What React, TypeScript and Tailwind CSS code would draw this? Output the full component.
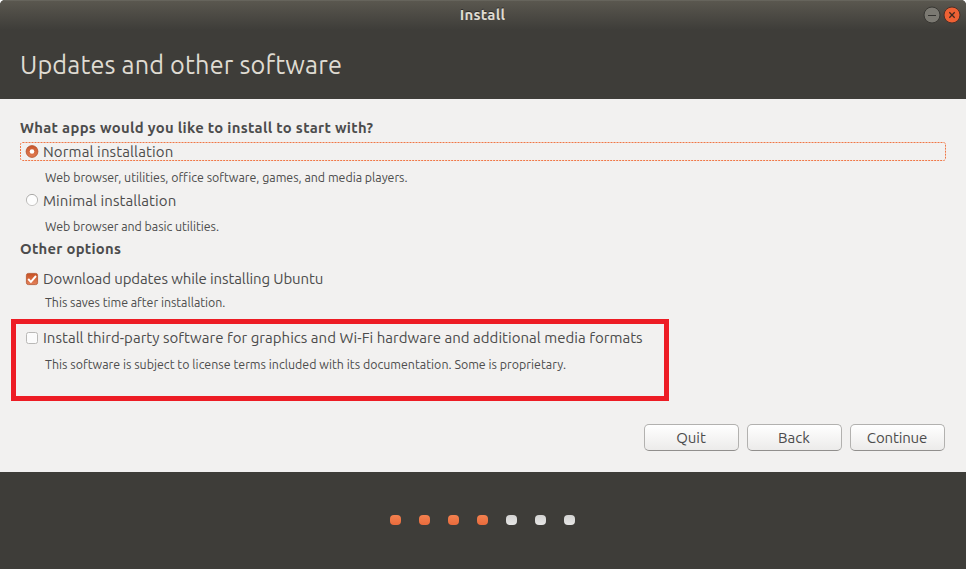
import type { ReactNode } from 'react';

function Radio({ checked = false }: { checked?: boolean }) {
  return (
    <svg className="size-[14px] shrink-0" viewBox="0 0 14 14">
      <defs>
        <linearGradient id="radioOn" x1="0" y1="0" x2="0" y2="1">
          <stop offset="0" stopColor="#c9572c" />
          <stop offset="1" stopColor="#e27d54" />
        </linearGradient>
        <linearGradient id="radioOff" x1="0" y1="0" x2="0" y2="1">
          <stop offset="0" stopColor="#a9a8a6" />
          <stop offset="1" stopColor="#c9c8c6" />
        </linearGradient>
      </defs>
      {checked ? (
        <>
          <circle cx="7" cy="6.5" r="5.9" fill="url(#radioOn)" stroke="#b4522c" strokeWidth="0.8" />
          <circle cx="7" cy="6.5" r="2.3" fill="#fff" />
        </>
      ) : (
        <circle cx="7" cy="7" r="5.6" fill="#fdfdfd" stroke="url(#radioOff)" />
      )}
    </svg>
  );
}

function Checkbox({ checked = false }: { checked?: boolean }) {
  return (
    <svg className="size-[14px] shrink-0" viewBox="0 0 14 14">
      <defs>
        <linearGradient id="checkOn" x1="0" y1="0" x2="0" y2="1">
          <stop offset="0" stopColor="#c85123" />
          <stop offset="1" stopColor="#e4825b" />
        </linearGradient>
      </defs>
      {checked ? (
        <>
          <rect x="1.4" y="1.4" width="11.2" height="11.2" rx="2" fill="url(#checkOn)" stroke="#b1542e" strokeWidth="0.8" />
          <path d="M3.2 7 5.9 9.8 11 4" fill="none" stroke="#fff" strokeWidth="1.9" />
        </>
      ) : (
        <rect x="1.5" y="1.5" width="11" height="11" rx="2" fill="#fbfbfb" stroke="#b9b8b6" />
      )}
    </svg>
  );
}

function Note({ className, children }: { className: string; children: ReactNode }) {
  return <p className={`ml-[25px] h-5 text-[12.4px] leading-[21px] ${className}`}>{children}</p>;
}

function Button({ className = '', children }: { className?: string; children: ReactNode }) {
  return (
    <button
      className={`h-[27px] w-[95px] rounded-[5px] border border-[#b2b1af] border-b-[#918f8d] bg-linear-to-b from-white to-[#ecebea] pr-px text-[15px] leading-[25px] ${className}`}
    >
      {children}
    </button>
  );
}

const steps = [true, true, true, true, false, false, false];

export default function App() {
  return (
    <div className="h-[569px] w-[966px] bg-white font-['Ubuntu','Noto_Sans',sans-serif]">
      <div className="relative flex h-full flex-col overflow-hidden rounded-t-[5px] bg-[#3e3d39] whitespace-nowrap text-[#4c4c4c]">
        <header className="h-[99px] text-[#dfdbd2]">
          <div className="grid h-[30px] grid-cols-[1fr_auto_1fr] items-start border-t border-[#66645c] bg-linear-to-b from-[#5a574f] to-[#3e3d39] pt-[4px] pr-[5px]">
            <span className="col-start-2 pl-[4px] text-[15px] leading-5 font-bold tracking-[0.25px] [text-shadow:0_-1px_#2c2b28]">Install</span>
            <div className="flex justify-end gap-[2px] pt-px">
              <svg className="size-[18px]" viewBox="0 0 18 18">
                <circle cx="9" cy="9" r="8" fill="#7b7972" stroke="#383733" />
                <path d="M5 9.5h8" stroke="#33322f" strokeWidth="1" />
              </svg>
              <svg className="size-[18px]" viewBox="0 0 18 18">
                <circle cx="9" cy="9" r="8" fill="#ee6134" stroke="#4a3129" />
                <path d="m6.3 6.3 5.4 5.4m0-5.4-5.4 5.4" stroke="#41291f" strokeWidth="1.3" />
              </svg>
            </div>
          </div>
          <h1 className="mt-[18px] pl-[20px] text-[25.3px] leading-[33px] tracking-[0.13px]">Updates and other software</h1>
        </header>

        <main className="h-[373px] bg-[#f2f1f0] px-5 pt-[19px]">
          <h2 className="h-5 text-[14.8px] leading-5 font-bold tracking-[0.32px]">What apps would you like to install to start with?</h2>
          <div className="relative mt-[4px] flex h-[19px] w-[926px] items-center gap-[4px] pl-[5px] text-[15px] leading-[19px] tracking-[0.13px]">
            <svg className="pointer-events-none absolute inset-0 h-[19px] w-[926px]" viewBox="0 0 926 19">
              <rect x="0.5" y="0.5" width="925" height="18" rx="2" fill="none" stroke="#f07746" strokeDasharray="2 1" />
            </svg>
            <Radio checked />
            <span>Normal installation</span>
          </div>
          <Note className="mt-[6px] tracking-[-0.01px]">Web browser, utilities, office software, games, and media players.</Note>
          <div className="mt-[3px] flex h-5 items-center gap-[4px] pl-[5px] text-[15px] leading-5 tracking-[0.08px]">
            <Radio />
            <span className="pt-px">Minimal installation</span>
          </div>
          <Note className="mt-[6px] tracking-[-0.04px]">Web browser and basic utilities.</Note>
          <h2 className="mt-[3px] h-5 text-[14.8px] leading-5 font-bold tracking-[0.28px]">Other options</h2>
          <div className="mt-[10px] flex h-5 items-center gap-[4px] pl-[5px] text-[15px] leading-5 tracking-[-0.11px]">
            <Checkbox checked />
            <span>Download updates while installing Ubuntu</span>
          </div>
          <Note className="mt-[3px] tracking-[-0.03px]">This saves time after installation.</Note>
          <div className="mt-[16px] flex h-5 items-center gap-[4px] pl-[5px] text-[15px] leading-5 tracking-[0.03px]">
            <Checkbox />
            <span>Install third-party software for graphics and Wi-Fi hardware and additional media formats</span>
          </div>
          <Note className="mt-[6px] tracking-[0.015px]">
            This software is subject to license terms included with its documentation. Some is proprietary.
          </Note>
          <div className="mt-[50px] flex justify-end gap-2 pr-px">
            <Button>Quit</Button>
            <Button>Back</Button>
            <Button className="tracking-[-0.15px]">Continue</Button>
          </div>
        </main>

        <footer className="flex flex-1 items-start justify-center gap-[18px] pt-[43px] pr-px">
          {steps.map((done, i) => (
            <span
              key={i}
              className={`h-[10px] w-[11px] rounded-[4px] bg-linear-to-b ${done ? 'from-[#f3814f] to-[#e96b3c]' : 'from-[#d3d3d2] to-[#e6e6e5]'}`}
            />
          ))}
        </footer>

        <div className="pointer-events-none absolute top-[319px] left-[11px] h-[82px] w-[658px] border-5 border-[#ed1c24]" />
      </div>
    </div>
  );
}
